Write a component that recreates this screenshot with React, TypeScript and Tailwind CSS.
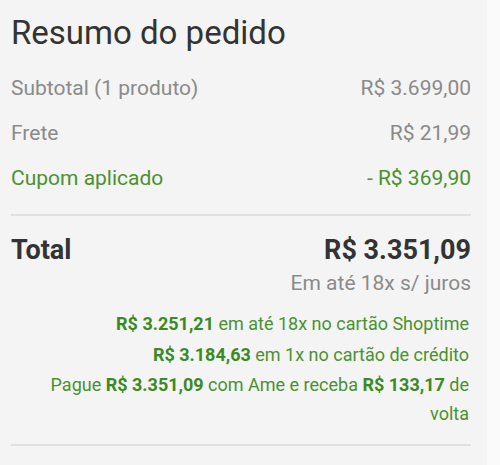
const rows = [
  { label: 'Subtotal (1 produto)', value: 'R$ 3.699,00', green: false },
  { label: 'Frete', value: 'R$ 21,99', green: false },
  { label: 'Cupom aplicado', value: '- R$ 369,90', green: true },
];

export default function App() {
  return (
    <div className="w-[500px] h-[465px] bg-[#fafafa] overflow-hidden" style={{ fontFamily: 'Roboto, sans-serif' }}>
      <div className="w-[487px] h-full bg-[#f4f4f4] pl-[11px] pr-[16px]">
        {/* Title */}
        <h1 className="pt-[13px] text-[33px] leading-[40px] text-[#333]">Resumo do pedido</h1>

        {/* Values */}
        <div className="mt-[20px] flex flex-col gap-[15px]">
          {rows.map((row) => (
            <div
              key={row.label}
              className={`flex justify-between text-[21px] leading-[30px] ${
                row.green ? 'text-[#4a9130]' : 'text-[#8a8a8a]'
              }`}
            >
              <span>{row.label}</span>
              <span>{row.value}</span>
            </div>
          ))}
        </div>

        <div className="mt-[21px] h-[2px] bg-[#e0e0e0]" />

        {/* Total */}
        <div className="mt-[17px] flex justify-between text-[27px] leading-[34px] font-bold text-[#333]">
          <span>Total</span>
          <span>R$ 3.351,09</span>
        </div>
        <div className="text-right text-[21px] leading-[32px] text-[#8a8a8a]">Em até 18x s/ juros</div>

        {/* Payment options */}
        <div className="mt-[9px] pr-[2px] text-right text-[18px] leading-[31px] text-[#4a9130]">
          <p>
            <b className="text-[#3a8a24]">R$ 3.251,21</b> em até 18x no cartão Shoptime
          </p>
          <p>
            <b className="text-[#3a8a24]">R$ 3.184,63</b> em 1x no cartão de crédito
          </p>
          <p className="leading-[29px]">
            Pague <b className="text-[#3a8a24]">R$ 3.351,09</b> com Ame e receba{' '}
            <b className="text-[#3a8a24]">R$ 133,17</b> de volta
          </p>
        </div>

        <div className="mt-[16px] h-[2px] bg-[#e0e0e0]" />
      </div>
    </div>
  );
}
